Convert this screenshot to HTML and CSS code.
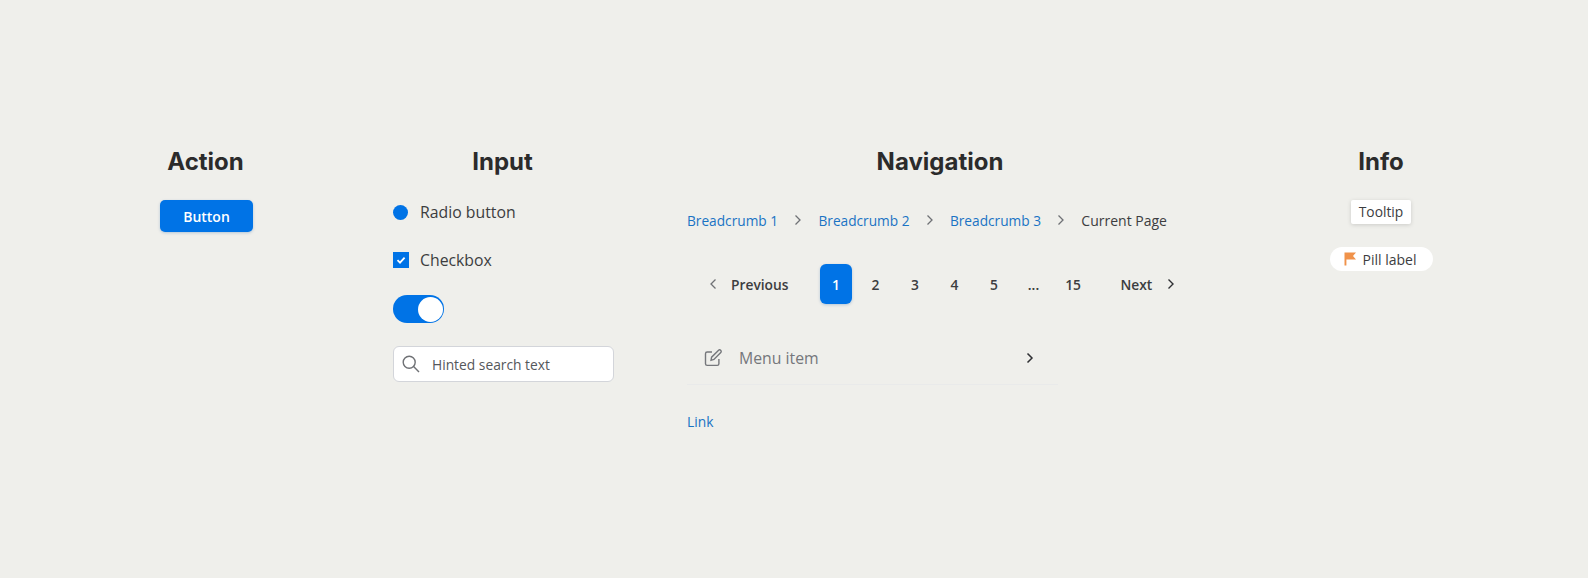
FILE: index.html
```html
<!doctype html>
<html>
  <head>
    <title>Components</title>
    <meta charset="utf-8">
    <link rel="stylesheet" href="styles.css">
  </head>
  <body>
    <div class="board">
      <section class="col col-action">
        <h2>Action</h2>
        <button class="btn">Button</button>
      </section>

      <section class="col col-input">
        <h2>Input</h2>
        <label class="choice choice-radio"><span class="radio"></span>Radio button</label>
        <label class="choice choice-check">
          <span class="check">
            <svg width="10" height="10" viewBox="0 0 10 10"><path d="M1.5 5.2 4 7.6 8.6 2.6" fill="none" stroke="#fff" stroke-width="1.8"/></svg>
          </span>Checkbox
        </label>
        <div class="toggle"><span class="knob"></span></div>
        <div class="search">
          <svg width="20" height="20" viewBox="0 0 20 20"><circle cx="8.2" cy="8.2" r="6" fill="none" stroke="#6f7175" stroke-width="1.4"/><path d="M12.6 12.6 18 18" stroke="#6f7175" stroke-width="1.4" fill="none"/></svg>
          <span>Hinted search text</span>
        </div>
      </section>

      <section class="col col-nav">
        <h2>Navigation</h2>
        <nav class="crumbs">
          <a>Breadcrumb 1</a>
          <svg class="chev" width="8" height="12" viewBox="0 0 8 12"><path d="M1.5 1.5 6 6 1.5 10.5" fill="none" stroke="#6f7175" stroke-width="1.3"/></svg>
          <a>Breadcrumb 2</a>
          <svg class="chev" width="8" height="12" viewBox="0 0 8 12"><path d="M1.5 1.5 6 6 1.5 10.5" fill="none" stroke="#6f7175" stroke-width="1.3"/></svg>
          <a>Breadcrumb 3</a>
          <svg class="chev" width="8" height="12" viewBox="0 0 8 12"><path d="M1.5 1.5 6 6 1.5 10.5" fill="none" stroke="#6f7175" stroke-width="1.3"/></svg>
          <span class="current">Current Page</span>
        </nav>
        <div class="pager">
          <svg class="pager-prev" width="8" height="12" viewBox="0 0 8 12"><path d="M6.5 1.5 2 6 6.5 10.5" fill="none" stroke="#6f7175" stroke-width="1.3"/></svg>
          <span class="pager-word">Previous</span>
          <span class="page page-on">1</span>
          <span class="page">2</span>
          <span class="page">3</span>
          <span class="page">4</span>
          <span class="page">5</span>
          <span class="page">...</span>
          <span class="page">15</span>
          <span class="pager-word pager-next">Next</span>
          <svg class="chev-next" width="8" height="12" viewBox="0 0 8 12"><path d="M1.5 1.5 6 6 1.5 10.5" fill="none" stroke="#2f3033" stroke-width="1.4"/></svg>
        </div>
        <div class="menu-item">
          <svg width="20" height="20" viewBox="0 0 20 20" fill="none" stroke="#75777b" stroke-width="1.4"><path d="M9 4H4.2A1.7 1.7 0 0 0 2.5 5.700v10a1.7 1.7 0 0 0 1.7 1.7h10a1.7 1.7 0 0 0 1.7-1.7V11"/><path d="M8 12.3 8.600 9.200 15.600 2.200a1.4 1.4 0 0 1 2 0l.2.2a1.4 1.4 0 0 1 0 2L10.900 11.500z"/></svg>
          <span class="menu-text">Menu item</span>
          <svg width="8" height="12" viewBox="0 0 8 12"><path d="M1.5 1.5 6 6 1.5 10.5" fill="none" stroke="#2f3033" stroke-width="1.5"/></svg>
        </div>
        <a class="link">Link</a>
      </section>

      <section class="col col-info">
        <h2>Info</h2>
        <div class="tooltip">Tooltip</div>
        <div class="pill">
          <svg width="12" height="14" viewBox="0 0 12 14"><path d="M0.500 0.500H12L9 4 12 7.500H2.400V13.500H0.500z" fill="#f0924a"/></svg>
          Pill label
        </div>
      </section>
    </div>
  </body>
</html>
```

FILE: styles.css
```css
* {
  box-sizing: border-box;
}
body {
  margin: 0;
  height: 578px;
  overflow: hidden;
  background: #efefeb;
  font-family: "Open Sans", sans-serif;
  color: #2f3033;
}
.board {
  display: flex;
  align-items: flex-start;
  padding: 147px 0 0 160px;
}
.col {
  display: flex;
  flex-direction: column;
}
h2 {
  margin: 0;
  font-family: Inter, sans-serif;
  font-size: 24px;
  line-height: 30px;
  font-weight: 700;
  text-align: center;
  color: #2b2b2b;
}
.col-action h2, .col-input h2 {
  padding-right: 2px;
}
.col-action {
  width: 93px;
}
.col-input {
  width: 221px;
  margin-left: 140px;
}
.col-nav {
  width: 506px;
  margin-left: 73px;
}
.col-info {
  width: 104px;
  align-items: center;
  margin-left: 136px;
}
.btn {
  width: 93px;
  height: 32px;
  margin-top: 23px;
  border: 0;
  border-radius: 5px;
  background: #0073e6;
  color: #fff;
  font-family: "Open Sans", sans-serif;
  font-size: 14px;
  font-weight: 600;
  box-shadow: 0 1px 3px rgba(0, 80, 160, 0.25);
}
.choice {
  display: flex;
  align-items: center;
  gap: 12px;
  height: 24px;
  font-size: 15.800px;
  color: #3c3d40;
}
.choice-radio {
  margin-top: 23px;
}
.choice-check {
  gap: 11px;
  margin-top: 24px;
}
.radio {
  width: 15px;
  height: 15px;
  border-radius: 50%;
  background: #0073e6;
}
.check {
  display: flex;
  align-items: center;
  justify-content: center;
  width: 16px;
  height: 16px;
  background: #0073e6;
}
.toggle {
  display: flex;
  justify-content: flex-end;
  align-items: center;
  width: 51px;
  height: 28px;
  margin-top: 23px;
  padding-right: 1px;
  border-radius: 14px;
  background: #0073e6;
}
.knob {
  width: 25px;
  height: 25px;
  border-radius: 50%;
  background: #fff;
}
.search {
  display: flex;
  align-items: center;
  gap: 11px;
  height: 36px;
  margin-top: 23px;
  padding-left: 7px;
  border: 1px solid #d3d5da;
  border-radius: 6px;
  background: #fff;
  font-size: 13.800px;
  color: #55575b;
}
.crumbs {
  display: flex;
  align-items: center;
  gap: 16.200px;
  margin-top: 31px;
  height: 24px;
  font-size: 13.700px;
}
.crumbs a, .link {
  color: #1a73c4;
}
.current {
  color: #3c3d40;
  font-size: 14px;
}
.chev {
  margin-top: -1px;
}
.pager {
  display: flex;
  align-items: center;
  height: 40px;
  margin-top: 32px;
  padding-left: 22px;
  font-size: 13.800px;
  font-weight: 600;
  color: #3c3d40;
}
.pager-word {
  margin-left: 14px;
}
.pager-next {
  margin-left: 24px;
  margin-right: 15px;
}
.page {
  width: 32px;
  height: 40px;
  margin-right: 7.500px;
  display: flex;
  align-items: center;
  justify-content: center;
}
.pager-word + .page {
  margin-left: 31.500px;
}
.page-on {
  border-radius: 6px;
  background: #0073e6;
  color: #fff;
  box-shadow: 0 1px 3px rgba(0, 80, 160, 0.25);
}
.menu-item {
  display: flex;
  align-items: center;
  width: 371px;
  height: 54px;
  margin-top: 27px;
  padding-left: 16px;
  border-bottom: 1px solid #e9eaea;
  font-size: 15.800px;
  color: #75777b;
}
.menu-text {
  margin-left: 16px;
  width: 287px;
}
.link {
  margin-top: 27px;
  font-size: 13.800px;
  line-height: 20px;
}
.tooltip {
  margin-top: 23px;
  padding: 0 8px;
  height: 24px;
  line-height: 24px;
  background: #fff;
  border-radius: 2px;
  font-size: 13.800px;
  color: #3c3d40;
  box-shadow: 0 1px 4px rgba(0, 0, 0, 0.15);
}
.pill {
  display: flex;
  align-items: center;
  gap: 7px;
  width: 103px;
  height: 24px;
  margin-top: 23px;
  padding-left: 14px;
  border-radius: 12px;
  background: #fff;
  font-size: 14px;
  font-weight: 500;
  color: #3c3d40;
}
```
